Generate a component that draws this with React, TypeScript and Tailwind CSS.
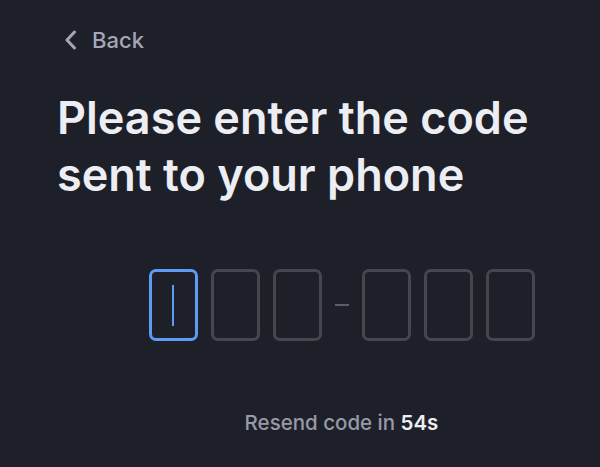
import { useState } from 'react';

function ChevronLeft() {
  return (
    <svg width="14" height="20" viewBox="0 0 14 20" fill="none" className="shrink-0">
      <path d="M11.5 2 L4 10 L11.5 18" stroke="currentColor" strokeWidth="3" strokeLinecap="round" strokeLinejoin="round" />
    </svg>
  );
}

export default function App() {
  const [digits] = useState(['', '', '', '', '', '']);

  const box = (i: number) => (
    <div
      key={i}
      className={`w-[49px] h-[72px] rounded-[7px] border-[3px] flex items-center justify-center ${
        i === 0 ? 'border-[#5e9bf5]' : 'border-[#46474e]'
      }`}
    >
      {i === 0 ? <div className="w-[1.5px] h-[41px] bg-[#5e9bf5]" /> : digits[i]}
    </div>
  );

  return (
    <div
      className="w-[600px] h-[467px] bg-[#1e2029] overflow-hidden"
      style={{ fontFamily: 'Inter, "Noto Sans", sans-serif' }}
    >
      <div className="pl-[63px] pt-[29px]">
        <button className="flex items-center gap-[15px] text-[#a4a6b5] text-[22px] font-medium leading-none">
          <ChevronLeft />
          <span>Back</span>
        </button>
      </div>

      <h1 className="pl-[57px] mt-[38px] text-[45px] leading-[57px] font-semibold text-[#eceef3]">
        Please enter the code
        <br />
        sent to your phone
      </h1>

      <div className="ml-[148px] w-[387px] mt-[66px] flex flex-col items-center">
        <div className="flex items-center">
          <div className="flex gap-[13px]">{[0, 1, 2].map(box)}</div>
          <div className="w-[14px] h-[2px] bg-[#5c5e67] mx-[13px]" />
          <div className="flex gap-[13px]">{[3, 4, 5].map(box)}</div>
        </div>
        <p className="mt-[72px] text-[20.5px] font-medium text-[#9799a8] leading-none">
          Resend code in <span className="font-semibold text-[#eceef3]">54s</span>
        </p>
      </div>
    </div>
  );
}
